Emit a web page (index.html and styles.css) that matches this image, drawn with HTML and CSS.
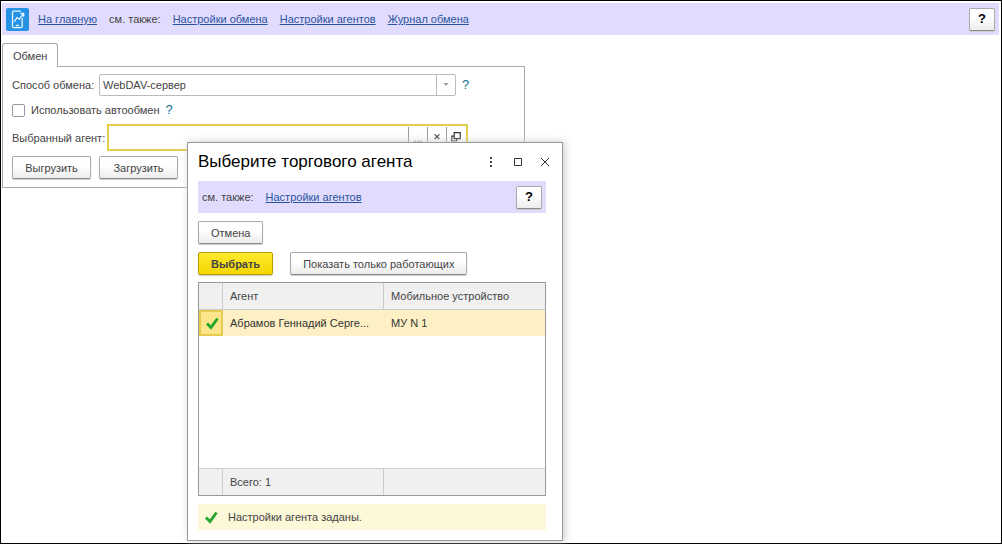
FILE: index.html
```html
<!DOCTYPE html>
<html lang="ru">
<head>
<meta charset="utf-8">
<title>Обмен</title>
<link rel="stylesheet" href="styles.css">
</head>
<body>
<div class="window">
  <header class="bar">
    <svg class="logo" viewBox="0 0 23 23" aria-hidden="true">
      <rect width="23" height="23" rx="2" fill="#2592e6"/>
      <g fill="none" stroke="#e6f6ff" stroke-width="1.3" stroke-linecap="round" stroke-linejoin="round">
        <path d="M14.5 3.2H7.8Q6.5 3.2 6.5 4.5V18.2Q6.5 19.6 7.8 19.6H14.8Q16.2 19.6 16.2 18.2V10.5"/>
        <path d="M8.5 13.5L11 9.5L13.2 11.3L17.5 5.6M14.9 5.5H17.7V8.3M10.3 17.5H12.5"/>
      </g>
    </svg>
    <nav class="links">
      <a href="#home">На главную</a>
      <span>см. также:</span>
      <a href="#exchange">Настройки обмена</a>
      <a href="#agents">Настройки агентов</a>
      <a href="#log">Журнал обмена</a>
    </nav>
    <button class="btn help" type="button">?</button>
  </header>

  <main class="page">
    <button class="tab" type="button">Обмен</button>
    <form class="panel">
      <div class="field method">
        <label for="method">Способ обмена:</label>
        <div class="combo">
          <select id="method"><option>WebDAV-сервер</option></select>
          <svg class="arrow" viewBox="0 0 18 20" aria-hidden="true"><path d="M6.500 8H11.500L9 11Z" fill="#999"/></svg>
        </div>
        <a class="hint" href="#method-help">?</a>
      </div>
      <div class="field auto">
        <input id="auto" type="checkbox">
        <label for="auto">Использовать автообмен</label>
        <a class="hint" href="#auto-help">?</a>
      </div>
      <div class="field agent">
        <label for="agent">Выбранный агент:</label>
        <div class="picker">
          <input id="agent" type="text">
          <button type="button" aria-label="Выбрать агента">...</button>
          <button type="button" aria-label="Очистить"><svg viewBox="0 0 10 10"><path d="M3 2L7 6M7 2L3 6" stroke="#444" fill="none"/></svg></button>
          <button type="button" aria-label="Открыть"><svg viewBox="0 0 10 10"><path d="M3.500 .5H8.500V5.500H3.500ZM3 3.500H1.500V7.500H5.500V6" stroke="#333" fill="none"/></svg></button>
        </div>
      </div>
      <div class="actions">
        <button class="btn wide" type="button">Выгрузить</button>
        <button class="btn wide" type="button">Загрузить</button>
      </div>
    </form>
  </main>

  <section class="dialog" role="dialog" aria-labelledby="dialog-title">
    <div class="titlebar">
      <h1 id="dialog-title">Выберите торгового агента</h1>
      <button type="button" aria-label="Меню"><svg viewBox="0 0 12 12"><path d="M5 1H7V3H5ZM5 5H7V7H5ZM5 9H7V11H5Z" fill="#444"/></svg></button>
      <button type="button" aria-label="Развернуть"><svg viewBox="0 0 12 12"><path d="M2.500 2.500H9.500V9.500H2.500Z" stroke="#333" fill="none"/></svg></button>
      <button type="button" aria-label="Закрыть"><svg viewBox="0 0 12 12"><path d="M2 2L10 10M10 2L2 10" stroke="#333" fill="none"/></svg></button>
    </div>
    <div class="bar subbar">
      <nav class="links">
        <span>см. также:</span>
        <a href="#agents">Настройки агентов</a>
      </nav>
      <button class="btn help" type="button">?</button>
    </div>
    <div class="commands"><button class="btn" type="button">Отмена</button></div>
    <div class="commands">
      <button class="btn primary" type="button">Выбрать</button>
      <button class="btn" type="button">Показать только работающих</button>
    </div>
    <table class="grid">
      <colgroup><col class="mark"><col><col></colgroup>
      <thead><tr><th></th><th>Агент</th><th>Мобильное устройство</th></tr></thead>
      <tbody>
        <tr class="selected">
          <td class="current"><svg class="check" viewBox="0 0 14 14"><path d="M2 7.500L6 11.500L12.500 2.500" stroke="#21a52b" stroke-width="2.800" fill="none"/></svg></td>
          <td>Абрамов Геннадий Серге...</td><td>МУ N 1</td>
        </tr>
        <tr class="rest"><td colspan="3"></td></tr>
      </tbody>
      <tfoot><tr><td></td><td>Всего: 1</td><td></td></tr></tfoot>
    </table>
    <p class="status">
      <svg class="check" viewBox="0 0 14 14"><path d="M2 7.500L6 11.500L12.500 2.500" stroke="#21a52b" stroke-width="2.800" fill="none"/></svg>
      Настройки агента заданы.
    </p>
  </section>
</div>
</body>
</html>
```
FILE: styles.css
```css
* {
  box-sizing: border-box;
}

body {
  margin: 0;
  background: #fff;
  color: #444;
  font: 11px/16px "Liberation Sans", Arial, sans-serif;
}

button,
input,
select {
  color: inherit;
  font: inherit;
}

a {
  color: #2a54a0;
}

.window {
  position: relative;
  min-height: 100vh;
  padding: 2px 2px 0 1px;
  border: 1px solid #000;
}

.bar {
  display: flex;
  align-items: center;
  height: 32px;
  padding: 0 4px;
  background: #e1dcfe;
}

.logo {
  width: 23px;
  height: 23px;
  margin-right: 9px;
}

.links {
  display: flex;
  flex: 1;
  gap: 12px;
}

.btn {
  height: 23px;
  padding: 0 12px;
  border: 1px solid #aaa;
  border-bottom-color: #888;
  border-radius: 2px;
  background: linear-gradient(#fff 40%, #ececec);
  box-shadow: 0 1px 1px #ccc;
}

.help {
  width: 26px;
  padding: 0;
  color: #000;
  font-size: 13px;
  font-weight: bold;
}

.page {
  width: 523px;
  max-width: 100%;
  padding-top: 8px;
}

.tab {
  display: block;
  height: 24px;
  margin-bottom: -1px;
  padding: 0 10px;
  position: relative;
  border: 1px solid #aaa;
  border-bottom: 0;
  border-radius: 3px 3px 0 0;
  background: #fff;
}

.panel {
  padding: 7px 9px 8px;
  border: 1px solid #aaa;
}

.field {
  display: flex;
  align-items: center;
}

.method label {
  width: 87px;
  white-space: nowrap;
}

.agent label {
  width: 95px;
  white-space: nowrap;
}

.combo {
  display: flex;
  width: 357px;
  height: 22px;
  border: 1px solid #bbb;
  border-radius: 2px;
}

.combo select {
  flex: 1;
  padding: 0 3px;
  border: 0;
  background: transparent;
  appearance: none;
}

.arrow {
  width: 19px;
  border-left: 1px solid #bbb;
}

.hint {
  margin-left: 6px;
  color: #0d6f92;
  font-size: 13px;
  text-decoration: none;
}

.auto {
  height: 28px;
}

.auto input {
  width: 13px;
  height: 13px;
  margin: 0 6px 0 0;
  border: 1px solid #999;
  border-radius: 2px;
  background: #fff;
  appearance: none;
}

.picker {
  display: flex;
  width: 361px;
  height: 27px;
  padding: 1px;
  border: 2px solid #e5ce4b;
}

.picker input {
  flex: 1;
  min-width: 0;
  border: 0;
  outline: 0;
}

.picker button {
  display: flex;
  align-items: center;
  justify-content: center;
  width: 19px;
  padding: 0;
  border: 0;
  border-left: 1px solid #999;
  background: #fff;
}

.picker svg {
  width: 12px;
  height: 12px;
}

.actions {
  display: flex;
  gap: 8px;
  padding-top: 5px;
}

.wide {
  width: 79px;
  padding: 0;
}

.dialog {
  position: absolute;
  top: 141px;
  left: 186px;
  width: 376px;
  padding: 0 16px 10px 10px;
  border: 1px solid #999;
  background: #fff;
  box-shadow: 2px 0 8px #ccc;
}

.titlebar {
  display: flex;
  align-items: center;
  height: 38px;
  margin-right: -12px;
}

.titlebar h1 {
  flex: 1;
  margin: 0;
  color: #000;
  font-size: 17px;
  font-weight: normal;
}

.titlebar button {
  display: flex;
  align-items: center;
  justify-content: center;
  width: 27px;
  height: 24px;
  padding: 0;
  border: 0;
  background: none;
}

.titlebar svg {
  width: 12px;
  height: 12px;
}

.commands {
  display: flex;
  gap: 17px;
  padding-top: 8px;
}

.primary {
  border-color: #b99d00;
  background: linear-gradient(#ffe92e, #f3d600);
  font-weight: bold;
}

.grid {
  width: 100%;
  height: 214px;
  margin-top: 7px;
  border: 1px solid #999;
  border-collapse: separate;
  border-spacing: 0;
  table-layout: fixed;
}

.mark {
  width: 24px;
}

.grid th,
.grid td {
  height: 26px;
  padding: 0 7px;
  overflow: hidden;
  font-weight: normal;
  text-align: left;
  text-overflow: ellipsis;
  white-space: nowrap;
}

.grid th,
.grid tfoot td {
  height: 27px;
  border-right: 1px solid #ccc;
  background: #f0f0f0;
}

.grid th {
  border-bottom: 1px solid #ccc;
}

.grid tfoot td {
  border-top: 1px solid #ccc;
}

.grid tr > :last-child {
  border-right: 0;
}

.grid .selected td {
  background: #fdf0c4;
  color: #333;
}

.grid .selected .current {
  padding: 0 0 0 4px;
  border: 2px solid #e6c94f;
  background: #fde58b;
}

.grid .rest td {
  height: auto;
}

.check {
  display: block;
  width: 14px;
  height: 14px;
}

.status {
  display: flex;
  align-items: center;
  gap: 10px;
  height: 26px;
  margin: 8px 0 0;
  padding-left: 6px;
  background: #fdf8d8;
}
```
